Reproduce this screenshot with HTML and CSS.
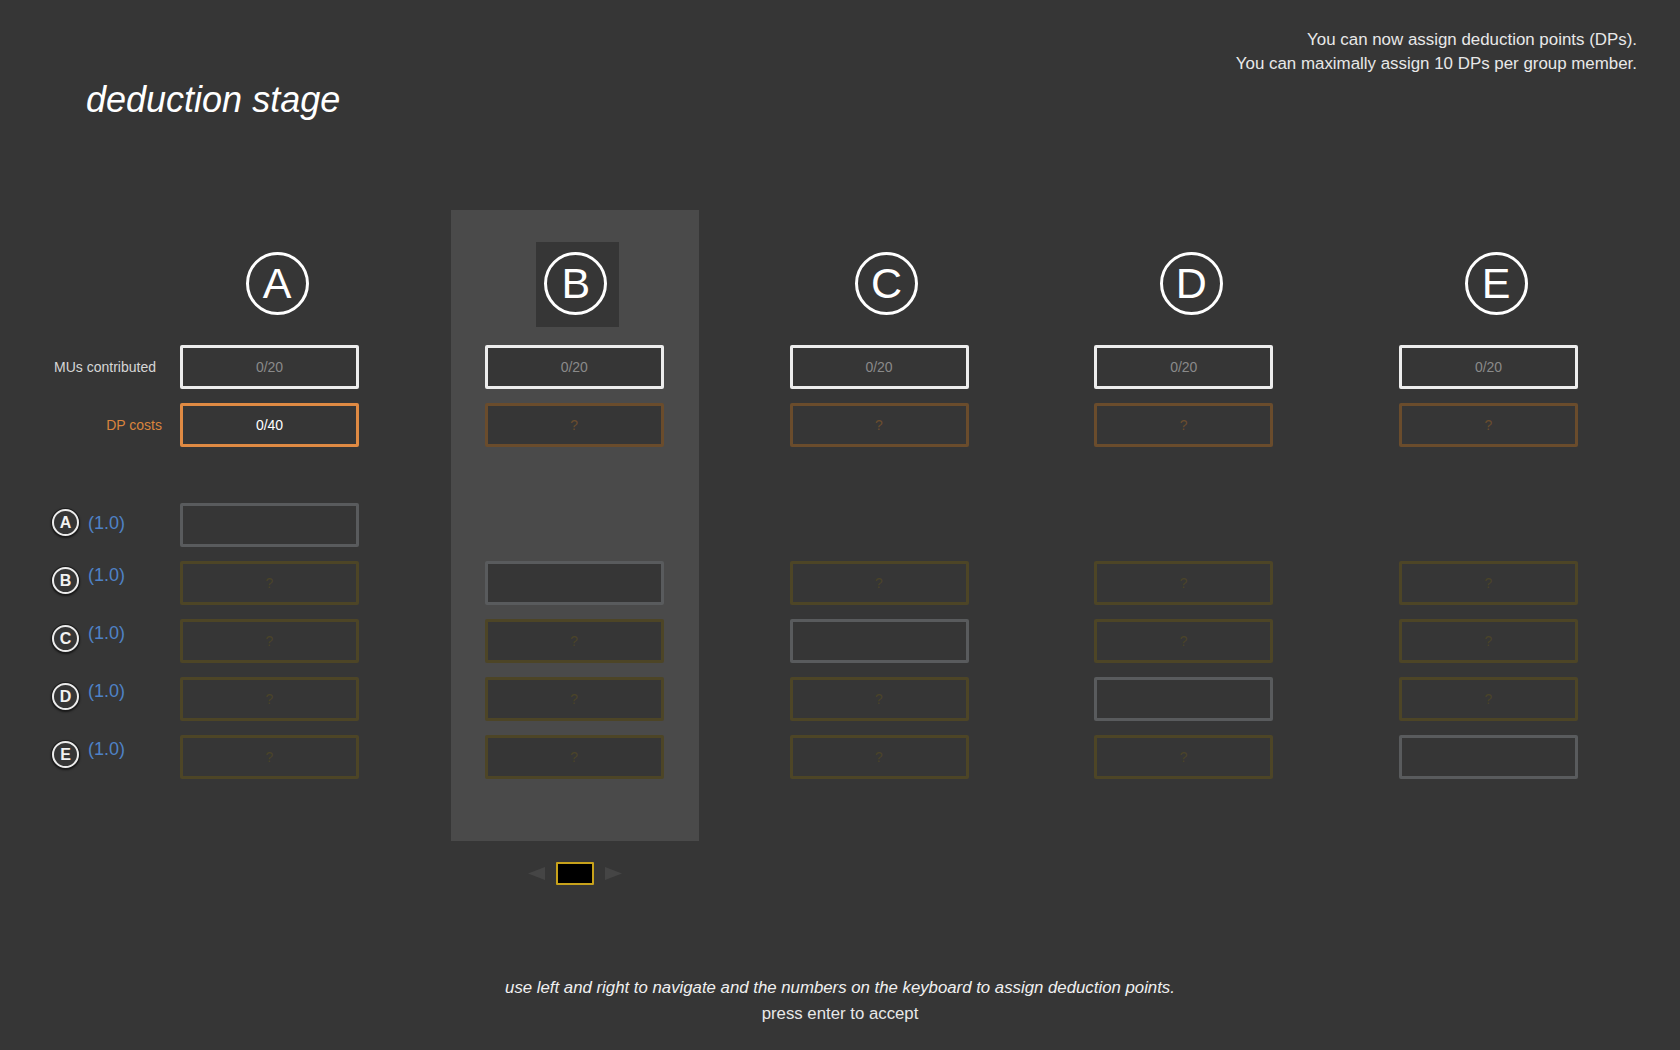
FILE: index.html
```html
<!DOCTYPE html>
<html lang="en">
<head>
<meta charset="utf-8">
<title>deduction stage</title>
<link rel="stylesheet" href="styles.css">
</head>
<body>
<div class="page">
  <header class="top">
    <h1 class="title">deduction stage</h1>
    <div class="info">
      <p>You can now assign deduction points (DPs).</p>
      <p>You can maximally assign 10 DPs per group member.</p>
    </div>
  </header>

  <main class="board">
    <div class="labels">
      <div class="head-space"></div>
      <div class="lbl lbl-mu">MUs contributed</div>
      <div class="lbl lbl-dp">DP costs</div>
      <div class="rowlbl first"><span class="mini">A</span><span class="weight">(1.0)</span></div>
      <div class="rowlbl"><span class="mini">B</span><span class="weight">(1.0)</span></div>
      <div class="rowlbl"><span class="mini">C</span><span class="weight">(1.0)</span></div>
      <div class="rowlbl"><span class="mini">D</span><span class="weight">(1.0)</span></div>
      <div class="rowlbl"><span class="mini">E</span><span class="weight">(1.0)</span></div>
    </div>

    <div class="col">
      <div class="head"><span class="big">A</span></div>
      <div class="box mu">0/20</div>
      <div class="box dp active">0/40</div>
      <div class="box cell self first"></div>
      <div class="box cell">?</div>
      <div class="box cell">?</div>
      <div class="box cell">?</div>
      <div class="box cell">?</div>
    </div>

    <div class="col-wrap current">
      <div class="col panel">
        <div class="head sel"><div class="frame"><span class="big">B</span></div></div>
        <div class="box mu">0/20</div>
        <div class="box dp">?</div>
        <div class="box cell hidden first"></div>
        <div class="box cell self"></div>
        <div class="box cell">?</div>
        <div class="box cell">?</div>
        <div class="box cell">?</div>
      </div>
      <div class="nav">
        <svg class="arrow" width="17" height="13" viewBox="0 0 17 13"><polygon points="0,6.5 17,0 17,13" fill="#454545"/></svg>
        <div class="navbox"></div>
        <svg class="arrow" width="17" height="13" viewBox="0 0 17 13"><polygon points="17,6.5 0,0 0,13" fill="#454545"/></svg>
      </div>
    </div>

    <div class="col">
      <div class="head"><span class="big">C</span></div>
      <div class="box mu">0/20</div>
      <div class="box dp">?</div>
      <div class="box cell hidden first"></div>
      <div class="box cell">?</div>
      <div class="box cell self"></div>
      <div class="box cell">?</div>
      <div class="box cell">?</div>
    </div>

    <div class="col">
      <div class="head"><span class="big">D</span></div>
      <div class="box mu">0/20</div>
      <div class="box dp">?</div>
      <div class="box cell hidden first"></div>
      <div class="box cell">?</div>
      <div class="box cell">?</div>
      <div class="box cell self"></div>
      <div class="box cell">?</div>
    </div>

    <div class="col">
      <div class="head"><span class="big">E</span></div>
      <div class="box mu">0/20</div>
      <div class="box dp">?</div>
      <div class="box cell hidden first"></div>
      <div class="box cell">?</div>
      <div class="box cell">?</div>
      <div class="box cell">?</div>
      <div class="box cell self"></div>
    </div>
  </main>

  <footer class="help">
    <p class="help-1">use left and right to navigate and the numbers on the keyboard to assign deduction points.</p>
    <p class="help-2">press enter to accept</p>
  </footer>
</div>
</body>
</html>
```

FILE: styles.css
```css
* { box-sizing: border-box; }

html, body {
  margin: 0;
  padding: 0;
  background: #363636;
  font-family: "Liberation Sans", Arial, Helvetica, sans-serif;
  color: #e6e6e6;
}

.page {
  width: 1680px;
  height: 1050px;
  overflow: hidden;
}

/* ---------- header ---------- */
.top {
  height: 210px;
  display: flex;
  justify-content: space-between;
  align-items: flex-start;
  padding: 28px 43px 0 86px;
}

.title {
  margin: 51px 0 0 0;
  font-size: 36px;
  line-height: 41px;
  font-weight: normal;
  font-style: italic;
  color: #ffffff;
}

.info {
  text-align: right;
  font-size: 16.9px;
  line-height: 23.5px;
  color: #e8e8e8;
}
.info p { margin: 0; }

/* ---------- board ---------- */
.board {
  display: flex;
  align-items: flex-start;
  column-gap: 125.75px;
}

.labels {
  width: 180px;
  margin-right: -125.75px;
  display: flex;
  flex-direction: column;
}

.head-space { height: 117px; }

.lbl {
  height: 44px;
  display: flex;
  align-items: center;
  justify-content: flex-end;
  font-size: 14px;
}
.lbl-mu {
  margin-top: 18px;
  padding-right: 24px;
  color: #d6d6d6;
}
.lbl-dp {
  margin-top: 14px;
  padding-right: 18px;
  color: #d9843d;
}

.rowlbl {
  height: 44px;
  margin-top: 14px;
  padding-left: 52px;
  display: flex;
  align-items: center;
  gap: 9px;
}
.rowlbl.first { margin-top: 56px; }

.mini {
  width: 27px;
  height: 27px;
  border-radius: 50%;
  border: 2px solid #ececec;
  box-shadow: 0 0 0 1px #1c1c1c, 0 1px 2px 1px rgba(0,0,0,0.6);
  display: flex;
  align-items: center;
  justify-content: center;
  font-size: 16px;
  line-height: 1;
  font-weight: bold;
  color: #f2f2f2;
  margin-bottom: 5px;
}

.weight {
  font-size: 18px;
  line-height: 1;
  color: #4f82c6;
  margin-bottom: 17px;
}
.rowlbl.first .weight { margin-bottom: 5px; }

/* ---------- columns ---------- */
.col {
  width: 179px;
  display: flex;
  flex-direction: column;
}

.col-wrap.current {
  margin: 0 -35px 0 -34px;
  display: flex;
  flex-direction: column;
  align-items: center;
}

.col.panel {
  width: 248px;
  padding: 0 35px 62px 34px;
  background: #4a4a4a;
}

.head {
  height: 85px;
  margin-top: 32px;
  padding-left: 15px;
  padding-bottom: 3px;
  display: flex;
  align-items: center;
  justify-content: center;
}
.head.sel {
  padding-left: 6px;
  padding-bottom: 0;
}

.frame {
  width: 83px;
  height: 85px;
  background: #363636;
  display: flex;
  align-items: center;
  justify-content: center;
  padding-bottom: 3px;
  padding-right: 3px;
}

.big {
  width: 63px;
  height: 63px;
  flex: none;
  border-radius: 50%;
  border: 3px solid #ffffff;
  display: flex;
  align-items: center;
  justify-content: center;
  font-size: 43px;
  line-height: 1;
  color: #ffffff;
}

.box {
  width: 179px;
  height: 44px;
  border: 3px solid transparent;
  border-radius: 2px;
  background: #363636;
  display: flex;
  align-items: center;
  justify-content: center;
  font-size: 14px;
  line-height: 1;
}

.box.mu {
  margin-top: 18px;
  border-color: #ededed;
  color: #8a8a8a;
}

.box.dp {
  margin-top: 14px;
  border-color: #6a4c2c;
  color: #6a4d2e;
}
.box.dp.active {
  border-color: #df8a43;
  color: #ffffff;
}

.box.cell {
  margin-top: 14px;
  border-color: #4d4526;
  color: #4b4429;
}
.box.cell.first { margin-top: 56px; }
.box.cell.self {
  border-color: #595b5d;
}
.box.cell.hidden {
  visibility: hidden;
}

/* ---------- navigator ---------- */
.nav {
  margin-top: 21px;
  display: flex;
  align-items: center;
  gap: 11px;
}
.arrow { display: block; }
.navbox {
  width: 38px;
  height: 23px;
  background: #000000;
  border: 2px solid #c8a21b;
  border-radius: 1px;
}

/* ---------- footer ---------- */
.help {
  margin-top: 90px;
  text-align: center;
  font-size: 16.8px;
  line-height: 25.5px;
}
.help p { margin: 0; }
.help-1 {
  font-style: italic;
  color: #f0f0f0;
}
.help-2 { color: #e8e8e8; }
```
